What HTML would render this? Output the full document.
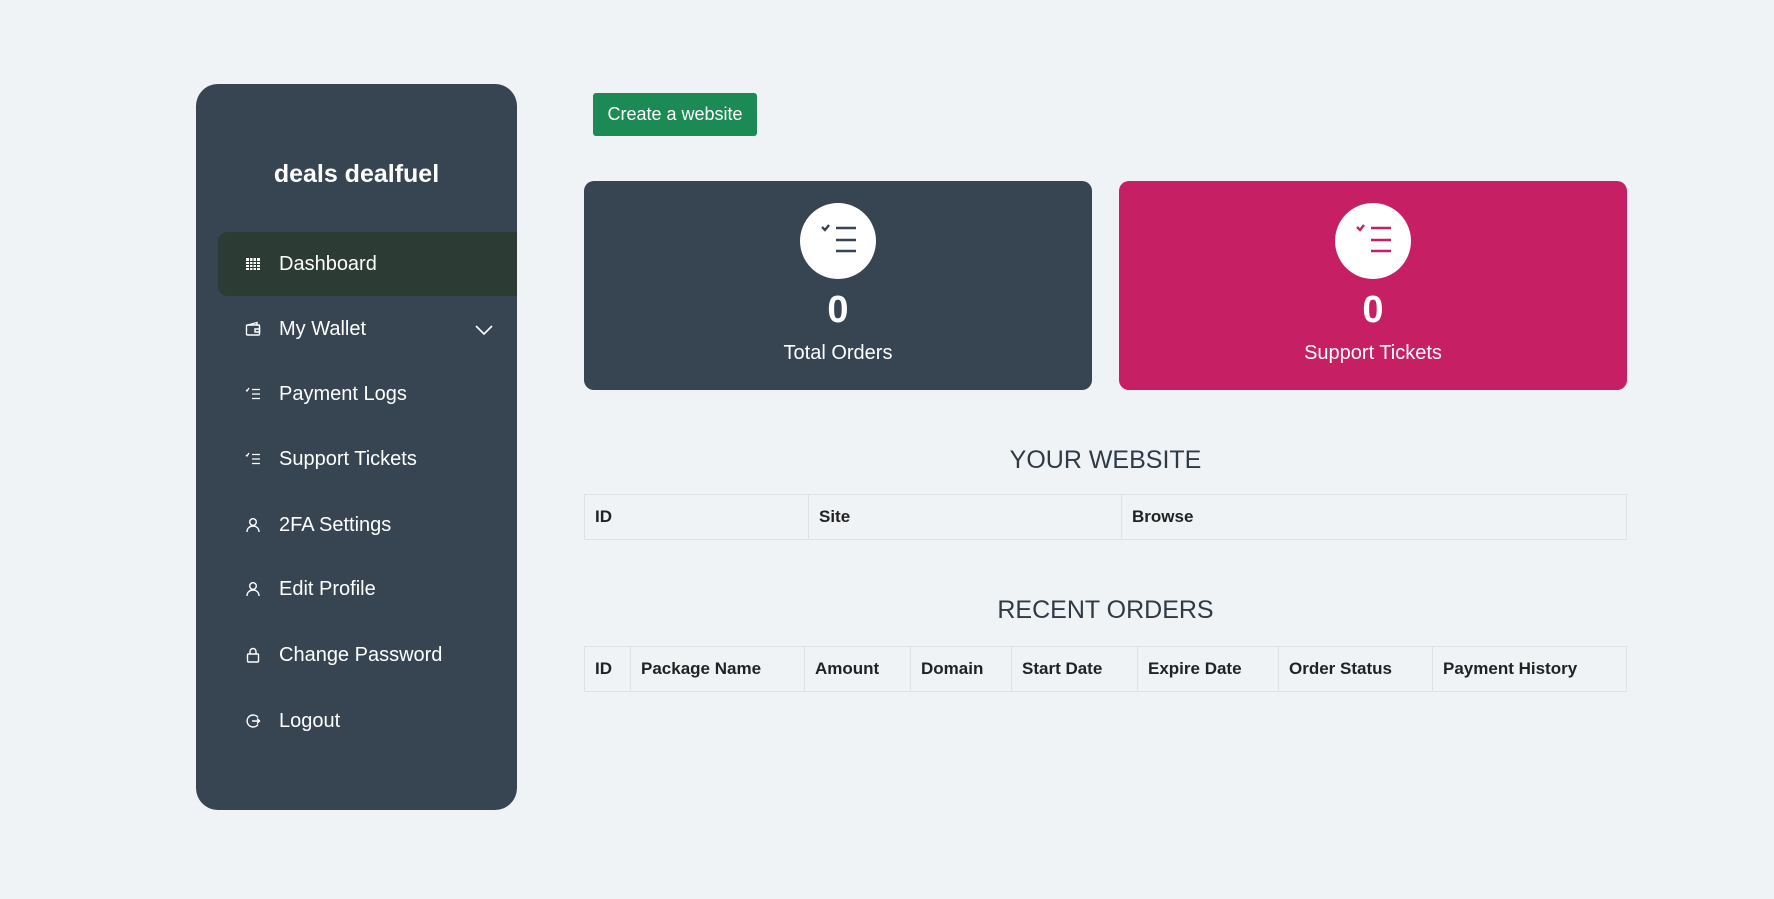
<!DOCTYPE html>
<html><head><style>
body{margin:0;width:1774px;height:899px;background:#eff3f6;font-family:"Liberation Sans",sans-serif;position:relative;overflow:hidden}
.sb{position:absolute;left:196px;top:84px;width:321px;height:726px;background:#374451;border-radius:22px;overflow:hidden}
.logo{position:absolute;top:160px;left:196px;width:321px;text-align:center;color:#fff;font-weight:bold;font-size:25px}
.act{position:absolute;left:218px;top:232px;width:299px;height:64px;background:#2c3b33;border-radius:10px 0 0 10px}
.mi{position:absolute;left:279px;color:#fff;font-size:20px;line-height:24px}
.ic{position:absolute;left:245px;width:16px;height:16px}
.btn{position:absolute;left:593px;top:93px;width:164px;height:43px;background:#1b8a55;border-radius:3px;color:#fff;font-size:18px;line-height:43px;text-align:center}
.card{position:absolute;top:181px;width:508px;height:209px;border-radius:10px;color:#fff;text-align:center}
.circ{position:absolute;left:216px;top:22px;width:76px;height:76px;border-radius:50%;background:#fff}
.num{position:absolute;top:108px;width:100%;font-size:38px;font-weight:bold}
.lab{position:absolute;top:161px;width:100%;font-size:20px}
h2{position:absolute;margin:0;left:584px;width:1043px;text-align:center;font-weight:normal;font-size:25px;color:#2e3a46}
table{position:absolute;left:584px;width:1043px;border-collapse:collapse;font-size:17px;font-weight:bold;color:#222}
td{border:1px solid #dde2e6;height:45px;padding:0 0 0 10px;box-sizing:border-box}
</style></head><body>
<div class="sb"></div>
<div class="logo">deals dealfuel</div>
<div class="act"></div>
<svg class="ic" style="top:256px" viewBox="0 0 16 16"><rect x="1" y="2" width="14" height="12" fill="#fff"/><g stroke="#2c3b33" stroke-width="1"><path d="M1 5.5H15M1 8.5H15M1 11.5H15M4.5 2V14M8 2V14M11.5 2V14"/></g></svg>
<div class="mi" style="top:252px">Dashboard</div>
<svg class="ic" style="top:321px" viewBox="0 0 16 16" fill="none" stroke="#fff" stroke-width="1.4"><rect x="1.5" y="4" width="13" height="10" rx="1"/><path d="M3 4L12 1.5V4M10 8h4.5v3H10z"/></svg>
<div class="mi" style="top:317px">My Wallet</div>
<svg style="position:absolute;left:474px;top:324px" width="20" height="12" viewBox="0 0 20 12" fill="none" stroke="#fff" stroke-width="1.6"><path d="M2 2l8 8 8-8"/></svg>
<svg class="ic" style="top:386px" viewBox="0 0 16 16" fill="none" stroke="#fff" stroke-width="1.3"><path d="M1 4l1 1 2-3M7 3.5H15M7 8H15M7 12.5H15"/></svg>
<div class="mi" style="top:382px">Payment Logs</div>
<svg class="ic" style="top:451px" viewBox="0 0 16 16" fill="none" stroke="#fff" stroke-width="1.3"><path d="M1 4l1 1 2-3M7 3.5H15M7 8H15M7 12.5H15"/></svg>
<div class="mi" style="top:447px">Support Tickets</div>
<svg class="ic" style="top:517px" viewBox="0 0 16 16" fill="none" stroke="#fff" stroke-width="1.4"><circle cx="8" cy="5" r="3.3"/><path d="M2 15c0-4 3-6 6-6s6 2 6 6"/></svg>
<div class="mi" style="top:513px">2FA Settings</div>
<svg class="ic" style="top:581px" viewBox="0 0 16 16" fill="none" stroke="#fff" stroke-width="1.4"><circle cx="8" cy="5" r="3.3"/><path d="M2 15c0-4 3-6 6-6s6 2 6 6"/></svg>
<div class="mi" style="top:577px">Edit Profile</div>
<svg class="ic" style="top:647px" viewBox="0 0 16 16" fill="none" stroke="#fff" stroke-width="1.4"><rect x="2.5" y="7" width="11" height="8" rx="1"/><path d="M5 7V4.5a3 3 0 016 0V7"/></svg>
<div class="mi" style="top:643px">Change Password</div>
<svg class="ic" style="top:713px" viewBox="0 0 16 16" fill="none" stroke="#fff" stroke-width="1.4"><path d="M13 4.5A6 6 0 1013 11.5M7 8h8M12 5.5L14.5 8 12 10.5"/></svg>
<div class="mi" style="top:709px">Logout</div>

<div class="btn">Create a website</div>

<div class="card" style="left:584px;background:#374451"><div class="circ"><svg width="76" height="76" viewBox="0 0 76 76" fill="none" stroke="#374451" stroke-width="2.4"><path d="M22 24l3 3 4-5M36 25H56M36 37H56M36 48H56"/></svg></div><div class="num">0</div><div class="lab">Total Orders</div></div>
<div class="card" style="left:1119px;background:#c71f63"><div class="circ"><svg width="76" height="76" viewBox="0 0 76 76" fill="none" stroke="#c71f63" stroke-width="2.4"><path d="M22 24l3 3 4-5M36 25H56M36 37H56M36 48H56"/></svg></div><div class="num">0</div><div class="lab">Support Tickets</div></div>

<h2 style="top:446px">YOUR WEBSITE</h2>
<table style="top:494px"><tr><td style="width:224px">ID</td><td style="width:313px">Site</td><td>Browse</td></tr></table>
<h2 style="top:596px">RECENT ORDERS</h2>
<table style="top:646px"><tr><td style="width:46px">ID</td><td style="width:174px">Package Name</td><td style="width:106px">Amount</td><td style="width:101px">Domain</td><td style="width:126px">Start Date</td><td style="width:141px">Expire Date</td><td style="width:154px">Order Status</td><td>Payment History</td></tr></table>
</body></html>
